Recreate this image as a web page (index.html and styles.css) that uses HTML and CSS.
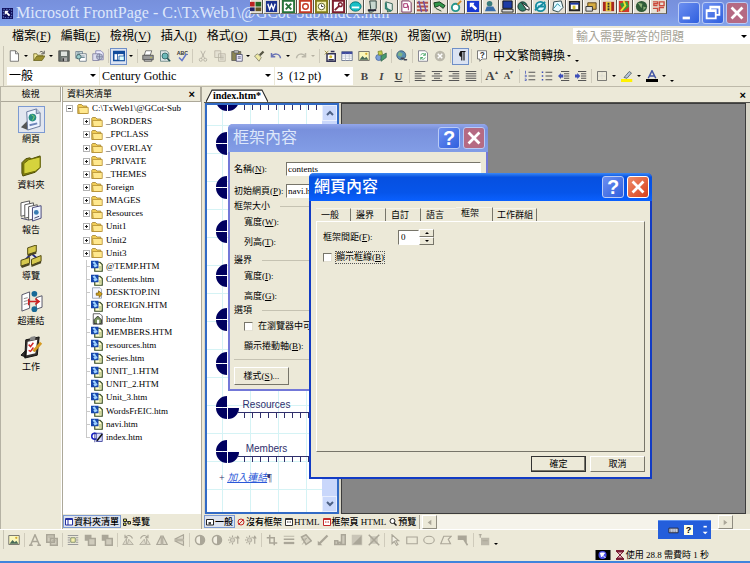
FILE: index.html
```html
<!DOCTYPE html>
<html lang="zh-Hant">
<head>
<meta charset="utf-8">
<title>Microsoft FrontPage</title>
<link rel="stylesheet" href="styles.css">
</head>
<body>
<svg class="sprite" aria-hidden="true">
  <symbol id="new" viewBox="0 0 16 16"><path d="M3 1h7l4 4v10H3z" fill="#fff" stroke="#555"/><path d="M10 1v4h4" fill="none" stroke="#555"/></symbol>
  <symbol id="open" viewBox="0 0 16 16"><path d="M1 14V5h4l1 2h7v2" fill="#f5ec9c" stroke="#66601c"/><path d="M1 14l4-6h11l-4 6z" fill="#9c9130" stroke="#66601c"/><path d="M9 3c2-2 4-1 5 1m1-3v4h-4" fill="none" stroke="#333"/></symbol>
  <symbol id="save" viewBox="0 0 16 16"><path d="M1 1h14v14H1z" fill="#68706c" stroke="#444"/><path d="M4 2h8v6H4z" fill="#dfe3df"/><path d="M5 10h7v5H5z" fill="#aaa"/><path d="M6 11h2v4H6z" fill="#333"/></symbol>
  <symbol id="find" viewBox="0 0 16 16"><path d="M1 2h9v9H1z" fill="#cdd" stroke="#678"/><path d="M6 5h9v10H6z" fill="#fff" stroke="#567"/><path d="M3 4h3M3 6h2m3 2h5m-5 2h5" stroke="#467"/><circle cx="5" cy="9" r="3" fill="#9cc" stroke="#355"/></symbol>
  <symbol id="publish" viewBox="0 0 16 16"><path d="M5 1h7l3 3v9H5z" fill="#eef" stroke="#77a"/><path d="M1 5h8v9H1z" fill="#dde" stroke="#779"/><circle cx="10" cy="9" r="4" fill="#b9c6d6" stroke="#779"/><path d="M6 9h8m-4-4v8" stroke="#779"/></symbol>
  <symbol id="pane" viewBox="0 0 16 16"><path d="M1 2h14v12H1z" fill="#fff" stroke="#124c9c" stroke-width="2"/><path d="M1 4h14" stroke="#124c9c" stroke-width="3"/><path d="M6 4v10m2-6h7v6H8z" stroke="#124c9c" fill="#dff"/></symbol>
  <symbol id="print" viewBox="0 0 16 16"><path d="M5 1h8l-2 6H3z" fill="#fff" stroke="#555"/><path d="M1 7h14v6H1z" fill="#999" stroke="#444"/><path d="M3 13h10v2H3z" fill="#ddd" stroke="#444"/><path d="M11 10h2" stroke="#cc3"/></symbol>
  <symbol id="preview" viewBox="0 0 16 16"><path d="M2 1h8l3 3v11H2z" fill="#dfe7e7" stroke="#577"/><circle cx="8" cy="8" r="4" fill="#6bb9b9" stroke="#255"/><path d="M11 11l4 4" stroke="#255" stroke-width="2"/></symbol>
  <symbol id="cut" viewBox="0 0 16 16"><path d="M5 1l5 10M11 1L6 11" stroke="#aaa69a" fill="none"/><circle cx="5" cy="13" r="2" fill="none" stroke="#aaa69a"/><circle cx="11" cy="13" r="2" fill="none" stroke="#aaa69a"/></symbol>
  <symbol id="copy" viewBox="0 0 16 16"><path d="M1 1h8v9H1zM6 5h9v10H6z" fill="#e4e1d3" stroke="#b5b1a3"/><path d="M8 8h5m-5 2h5m-5 2h5" stroke="#b5b1a3"/></symbol>
  <symbol id="paste" viewBox="0 0 16 16"><path d="M1 2h12v12H1z" fill="#8b8654" stroke="#555"/><path d="M4 1h6v3H4z" fill="#ccc" stroke="#555"/><path d="M7 6h8v9H7z" fill="#eef" stroke="#446"/><path d="M9 9h4m-4 2h4" stroke="#446"/></symbol>
  <symbol id="brush" viewBox="0 0 16 16"><path d="M9 7l5-5" stroke="#554" stroke-width="3"/><path d="M2 8l4-3 5 5-3 5z" fill="#eee9a4" stroke="#776"/></symbol>
  <symbol id="undo" viewBox="0 0 16 16"><path d="M2 4v5h5M2 9c3-5 11-5 12 2" stroke="#6973b5" stroke-width="2" fill="none"/></symbol>
  <symbol id="redo" viewBox="0 0 16 16"><path d="M14 4v5H9m5 0c-3-5-11-5-12 2" stroke="#bbb8aa" stroke-width="2" fill="none"/></symbol>
  <symbol id="comp" viewBox="0 0 16 16"><path d="M4 5h11v10H4z" fill="#fff" stroke="#335" stroke-width="2"/><path d="M1 1l5 5m0-5L1 6" stroke="#887520"/><circle cx="9" cy="9" r="2" fill="#d7bd33"/><path d="M6 13h7M9 2h5" stroke="#335" stroke-width="2"/></symbol>
  <symbol id="table" viewBox="0 0 16 16"><path d="M1 2h14v12H1z" fill="#fff" stroke="#546280"/><path d="M1 4h14" stroke="#3f4b9d" stroke-width="3"/><path d="M1 8h14M1 11h14M6 5v9m5-9v9" stroke="#b6becb"/></symbol>
  <symbol id="pic" viewBox="0 0 16 16"><path d="M1 2h14v12H1z" fill="#faf7bb" stroke="#555"/><path d="M2 13l4-5 3 3 2-2 3 4z" fill="#476a58"/><circle cx="11" cy="5" r="1.5" fill="#d6a92c"/></symbol>
  <symbol id="draw" viewBox="0 0 16 16"><circle cx="5" cy="10" r="4" fill="#7ba0d6" stroke="#4463a3"/><path d="M4 2l5-1 1 5-5 1z" fill="#c4cf49" stroke="#76822b"/><path d="M8 8l7-4v6l-7 5z" fill="#469a6f" stroke="#32624d"/></symbol>
  <symbol id="globe" viewBox="0 0 16 16"><circle cx="7" cy="7" r="6" fill="#5a90b4" stroke="#35536e"/><path d="M4 2l5 3-2 4-5-2z" fill="#7eb285"/><path d="M7 11h3m1 2h3" stroke="#445" stroke-width="2" stroke-linecap="round"/></symbol>
  <symbol id="refresh" viewBox="0 0 16 16"><path d="M2 1h9l3 3v11H2z" fill="#fff" stroke="#667"/><path d="M5 7c1-3 5-3 6 0m0-3v3H8m3 3c-1 3-5 3-6 0m0 3v-3h3" stroke="#219447" fill="none"/></symbol>
  <symbol id="stop" viewBox="0 0 16 16"><circle cx="8" cy="8" r="7" fill="#bbb8ab"/><path d="M5 5l6 6m0-6l-6 6" stroke="#fff" stroke-width="2"/></symbol>
  <symbol id="para" viewBox="0 0 16 16"><path d="M9 2v12M12 2v12M7 2h7" stroke="#111" stroke-width="1.5"/><path d="M9 2a3.500 3.500 0 000 7z" fill="#111"/></symbol>
  <symbol id="left" viewBox="0 0 16 16"><path d="M1 2h14M1 5h9M1 8h14M1 11h9M1 14h14" stroke="#555" stroke-width="1.500"/></symbol>
  <symbol id="center" viewBox="0 0 16 16"><path d="M1 2h14M4 5h8M1 8h14M4 11h8M1 14h14" stroke="#555" stroke-width="1.500"/></symbol>
  <symbol id="right" viewBox="0 0 16 16"><path d="M1 2h14M6 5h9M1 8h14M6 11h9M1 14h14" stroke="#555" stroke-width="1.500"/></symbol>
  <symbol id="just" viewBox="0 0 16 16"><path d="M1 2h14M1 5h14M1 8h14M1 11h14M1 14h14" stroke="#555" stroke-width="1.500"/></symbol>
  <symbol id="nums" viewBox="0 0 16 16"><path d="M6 3h9M6 8h9M6 13h9" stroke="#555" stroke-width="1.500"/><path d="M2 1v4M1 7h2v2H1m0 3h2v2H1" stroke="#3d4fb8" fill="none"/></symbol>
  <symbol id="bullets" viewBox="0 0 16 16"><path d="M6 3h9M6 8h9M6 13h9" stroke="#555" stroke-width="1.500"/><path d="M1 2h2v2H1zm0 5h2v2H1zm0 5h2v2H1z" fill="#3d4fb8"/></symbol>
  <symbol id="outdent" viewBox="0 0 16 16"><path d="M4 2h11M8 5h7M8 8h7M8 11h7M4 14h11" stroke="#555" stroke-width="1.500"/><path d="M7 6H4V4L0 8l4 4v-2h3z" fill="#3d4fb8"/></symbol>
  <symbol id="indent" viewBox="0 0 16 16"><path d="M4 2h11M8 5h7M8 8h7M8 11h7M4 14h11" stroke="#555" stroke-width="1.500"/><path d="M0 6h3V4l4 4-4 4v-2H0z" fill="#3d4fb8"/></symbol>
  <symbol id="border" viewBox="0 0 16 16"><path d="M2 2h12v12H2z" fill="none" stroke="#555"/><path d="M8 3v10M3 8h10" stroke="#ccc" stroke-dasharray="1 1"/></symbol>
  <symbol id="hilite" viewBox="0 0 16 16"><path d="M0 12h15v4H0z" fill="#fff200"/><path d="M4 10l7-8 3 2-6 7z" fill="#b8c4dc" stroke="#455"/></symbol>
  <symbol id="fcolor" viewBox="0 0 16 16"><path d="M0 12h16v4H0z" fill="#000"/><path d="M3 11l5-10 5 10M5 8h6" fill="none" stroke="#4356a5" stroke-width="2"/></symbol>
  <symbol id="folder" viewBox="0 0 16 16"><path d="M1 14V3l1-1h4l2 2h5v10z" fill="#f1cd57" stroke="#9b7a24"/><path d="M2 6h13v8H3z" fill="#ffe88e" stroke="#b08a2e"/></symbol>
  <symbol id="htm" viewBox="0 0 16 16"><path d="M5 3h7l3 3v9H5z" fill="#fffccc" stroke="#344a22" stroke-width="1.500"/><path d="M0 1h10v10H0z" fill="#1646ad"/><path d="M2 3l3-1 2 3-3 1zM3 7l4-2 2 3-4 2z" fill="#9fd3ff"/><path d="M12 8v5" stroke="#799541"/></symbol>
  <symbol id="ini" viewBox="0 0 16 16"><path d="M2 1h10l2 2v12H2z" fill="#f4f6ff" stroke="#8791a5"/><path d="M7 8h3V5l5 4-4 5v-3H7z" fill="#d4a51e" stroke="#795b0b"/></symbol>
  <symbol id="home" viewBox="0 0 16 16"><path d="M3 1h9l3 3v11H3z" fill="#fff" stroke="#333"/><path d="M4 9l5-5 5 5v5H4z" fill="#78915c" stroke="#222"/><path d="M8 9h3v5H8z" fill="#fff"/></symbol>
  <symbol id="frames" viewBox="0 0 16 16"><circle cx="5" cy="7" r="4" fill="#fff" stroke="#171fc5" stroke-width="2"/><path d="M5 2v13M7 3h8v11H7z" fill="#d9dcff" stroke="#252b8d"/><path d="M8 13l7-9" stroke="#111" stroke-width="2"/></symbol>
  <symbol id="vpage" viewBox="0 0 24 24"><path d="M1 20l7-7v10z" fill="#555"/><path d="M7 4l10-3 4 4v14L8 23z" fill="#eef4ff" stroke="#68789c"/><path d="M17 1v5l4-1" fill="#b9c8de" stroke="#68789c"/><circle cx="13" cy="10" r="4" fill="#268c83"/><path d="M12 7l3 2-2 4" stroke="#8bd66d" fill="none"/><path d="M10 18l8-2" stroke="#6e86ba" stroke-width="2"/></symbol>
  <symbol id="vfolder" viewBox="0 0 24 24"><path d="M2 20V9l4-4 4-1 2 1 9-3v12l-5 5-13 4z" fill="#858215" stroke="#494800"/><path d="M4 21V10l5-4 12-3v11l-5 4z" fill="#d5d33d" stroke="#696705"/></symbol>
  <symbol id="vreport" viewBox="0 0 24 24"><path d="M1 4l9-2v14l-9 2z" fill="#fff" stroke="#555"/><path d="M5 6l9-2v14l-9 2z" fill="#fff" stroke="#555"/><path d="M9 8l9-2v14l-9 2z" fill="#fff" stroke="#555"/><path d="M13 9l9-2v13l-9 3z" fill="#eef4ff" stroke="#447"/><circle cx="17" cy="14" r="2.500" fill="#397cb4"/><path d="M15 20l5-2M1 20l8 2" stroke="#446"/></symbol>
  <symbol id="vnav" viewBox="0 0 24 24"><path d="M12 9L6 15m6-6l7 6" stroke="#20288d" stroke-width="2" fill="none"/><path d="M8 3l9-3v7l-9 3zM1 16l9-3v6l-9 3zM12 15l10-4v6l-10 4z" fill="#d6c94e" stroke="#4d470d"/><path d="M8 10l9-3v2l-9 3zM1 22l9-3v2l-8 3zM12 21l10-4v2l-10 4z" fill="#4b4521"/></symbol>
  <symbol id="vlink" viewBox="0 0 24 24"><path d="M2 5l8-3v17l-8 3zM17 8l6-2v12l-6 2z" fill="#fff" stroke="#556"/><path d="M4 9l4-1m-4 4l4-1m-4 4l4-1" stroke="#888"/><path d="M9 12h10m-3-3l4 3-4 3M9 9v7" stroke="#cf2222" stroke-width="1.500" fill="none"/><circle cx="15" cy="4" r="3" fill="#176997"/><circle cx="15" cy="20" r="3" fill="#176997"/></symbol>
  <symbol id="vtask" viewBox="0 0 24 24"><path d="M1 20l5-5v7zM6 4l14-3-2 19-13 3z" fill="#37322f" stroke="#111"/><path d="M8 6l10-2-2 14-9 2z" fill="#fff"/><path d="M11 1l5-1v4l-6 1z" fill="#888"/><path d="M9 9l2 2 3-4m-5 8l2 1 3-4" stroke="#d12828" stroke-width="1.500" fill="none"/><path d="M14 16l8-9" stroke="#d69b22" stroke-width="3"/></symbol>
  <symbol id="gA" viewBox="0 0 16 16"><path d="M2 15L8 1l6 14M4 10h8M0 15h5m6 0h5" fill="none" stroke="#aaa698" stroke-width="2"/></symbol>
  <symbol id="gthumb" viewBox="0 0 16 16"><path d="M1 1h10v10H1zM6 6h9v9H6z" fill="#d0ccbd" stroke="#aaa698" stroke-width="2"/><path d="M3 4h6M8 9h5" stroke="#aaa698"/></symbol>
  <symbol id="gpos" viewBox="0 0 16 16"><path d="M1 2h14M1 5h3m-3 3h3m-3 3h3M12 5h3m-3 3h3m-3 3h3M1 14h14" stroke="#999" stroke-width="1.500"/><path d="M5 5h6v6H5z" fill="#f5f1ac" stroke="#675"/></symbol>
  <symbol id="gfwd" viewBox="0 0 16 16"><path d="M1 1h9v8H1z" fill="#aaa698"/><path d="M6 6h9v9H6z" fill="#cfcbbc" stroke="#aaa698" stroke-width="2"/></symbol>
  <symbol id="grot" viewBox="0 0 16 16"><path d="M1 14l5-8v8zM7 14h8l-6-7z" fill="#ddd9ca" stroke="#aaa698"/><path d="M5 4c4-4 8-1 9 2M4 1v4h4" stroke="#aaa698" stroke-width="1.500" fill="none"/></symbol>
  <symbol id="gflip" viewBox="0 0 16 16"><path d="M7 2v12H1zM9 2v12h6z" fill="#dedacb" stroke="#aaa698" stroke-width="1.500"/></symbol>
  <symbol id="gflipv" viewBox="0 0 16 16"><path d="M14 1v6H2zM14 15V9H2z" fill="#dedacb" stroke="#aaa698" stroke-width="1.500"/></symbol>
  <symbol id="gcon" viewBox="0 0 16 16"><circle cx="8" cy="8" r="6" fill="#f2efe2" stroke="#aaa698" stroke-width="2"/><path d="M8 2v12A6 6 0 008 2z" fill="#aaa698"/></symbol>
  <symbol id="gsun" viewBox="0 0 16 16"><circle cx="6" cy="8" r="3" fill="#d4d0c1" stroke="#aaa698"/><path d="M6 2v2m0 8v2M0 8h2M2 4l1 1m-1 7l1-1M9 5l1-1M13 13V3m-2 3l2-3 2 3" stroke="#aaa698" stroke-width="1.500" fill="none"/></symbol>
  <symbol id="gcrop" viewBox="0 0 16 16"><path d="M5 1v11h10M1 5h10v10" stroke="#aaa698" stroke-width="2" fill="none"/></symbol>
  <symbol id="glines" viewBox="0 0 16 16"><path d="M1 3h14" stroke="#aaa698"/><path d="M1 7h14" stroke="#aaa698" stroke-width="2"/><path d="M1 12h14" stroke="#aaa698" stroke-width="3"/></symbol>
  <symbol id="gpaint" viewBox="0 0 16 16"><path d="M2 4l6-3 7 8-7 5z" fill="#d7d3c3" stroke="#aaa698" stroke-width="2"/><path d="M2 8l7-2M3 14l6-9" stroke="#aaa698"/></symbol>
  <symbol id="gpen" viewBox="0 0 16 16"><path d="M3 13L14 2" stroke="#aaa698" stroke-width="3"/><path d="M1 9v6h6z" fill="#aaa698"/></symbol>
  <symbol id="gbars" viewBox="0 0 16 16"><path d="M1 9h4v5H1zM6 11h3v3H6zM10 1h5v13h-5z" fill="#ccc8ba" stroke="#aaa698" stroke-width="2"/></symbol>
  <symbol id="gpic" viewBox="0 0 16 16"><path d="M1 1h14v14H1z" fill="#c9c5b7"/><path d="M2 14L14 2v12z" fill="#aaa698"/></symbol>
  <symbol id="gx" viewBox="0 0 16 16"><path d="M3 3h10v10H3z" fill="#c9c5b7"/><path d="M1 1l14 14m0-14L1 15" stroke="#aaa698" stroke-width="2"/></symbol>
  <symbol id="gptr" viewBox="0 0 16 16"><path d="M4 1v12l3-3 3 5 2-1-3-5h4z" fill="#f2efe3" stroke="#aaa698" stroke-width="1.500"/></symbol>
  <symbol id="grect" viewBox="0 0 16 16"><path d="M1 4h14v9H1z" fill="none" stroke="#aaa698" stroke-width="1.500"/></symbol>
  <symbol id="goval" viewBox="0 0 16 16"><ellipse cx="8" cy="8" rx="7" ry="5" fill="none" stroke="#aaa698" stroke-width="1.500"/></symbol>
  <symbol id="gpoly" viewBox="0 0 16 16"><path d="M5 3h10l-4 4 3 6H1z" fill="none" stroke="#aaa698" stroke-width="1.500"/></symbol>
  <symbol id="ghot" viewBox="0 0 16 16"><path d="M1 2h12v10l-3-4H1z" fill="#aaa698"/><path d="M9 7l5 8" stroke="#aaa698" stroke-width="2"/></symbol>
  <symbol id="grest" viewBox="0 0 16 16"><path d="M4 5h11v10H4z" fill="#bcb8aa"/><path d="M1 1h4M3 0v5M6 9h7" stroke="#aaa698" stroke-width="1.500"/></symbol>
  <symbol id="tabframe" viewBox="0 0 16 16"><path d="M1 3h14v11H1z" fill="#fff" stroke="#222" stroke-width="2"/><path d="M5 8h5v5H5z" fill="#444"/></symbol>
  <symbol id="tablist" viewBox="0 0 16 16"><path d="M1 1h14v13H1z" fill="#fff" stroke="#2430a2" stroke-width="2"/><path d="M6 1v13M1 3h14" stroke="#2430a2" stroke-width="2"/></symbol>
  <symbol id="tabnav" viewBox="0 0 16 16"><path d="M1 2h6v5H1zM1 10h5v5H1zM10 7h5v5h-5z" fill="#e3e05a" stroke="#222" stroke-width="2"/><path d="M7 5l3 4" stroke="#222" stroke-width="2"/></symbol>
  <symbol id="tabno" viewBox="0 0 16 16"><circle cx="8" cy="8" r="6" fill="none" stroke="#c72525" stroke-width="2"/><path d="M3 13L13 3" stroke="#c72525" stroke-width="2"/></symbol>
  <symbol id="tabhtml" viewBox="0 0 16 16"><path d="M1 1h14v14H1z" fill="#fff" stroke="#333" stroke-width="2"/><path d="M4 8h3m2 0h3M1 3h14" stroke="#333" stroke-width="2"/></symbol>
  <symbol id="tabfhtml" viewBox="0 0 16 16"><path d="M1 1h14v14H1z" fill="#fff" stroke="#c42a2a" stroke-width="2"/><path d="M4 8h3m2 0h3M1 3h14" stroke="#c42a2a" stroke-width="2"/></symbol>
  <symbol id="tabview" viewBox="0 0 16 16"><circle cx="7" cy="6" r="5" fill="#fff" stroke="#222" stroke-width="2"/><path d="M10 10l5 5" stroke="#222" stroke-width="3"/></symbol>
  <symbol id="orb" viewBox="0 0 76 44"><path d="M11 21H0a11 11 0 0111-11zM11 22v11A11 11 0 010 22zM12 22h11a11 11 0 01-11 11z" fill="#000060"/></symbol>
</svg>

<div class="app">
  <header class="titlebar">
    <svg class="logo" viewBox="0 0 16 16"><path d="M0 0h16v16H0z" fill="#10105c"/><path d="M4 4h6L8 6l4 4-2 2-4-4-2 2z" fill="#fff"/><path d="M2 2h12v12H2z" fill="none" stroke="#8fb3ff" stroke-dasharray="2 2"/></svg>
    <h1>Microsoft FrontPage - C:\TxWeb1\@GCot-Sub\index.htm</h1>
    <div class="winbtns">
      <button class="wb" aria-label="最小化"><svg viewBox="0 0 22 22"><path d="M4 15h8v3H4z" fill="#fff"/></svg></button>
      <button class="wb" aria-label="還原"><svg viewBox="0 0 22 22"><path d="M8 8V4h10v9h-4M4 8h10v9H4zM4 9h10M8 5h10" fill="none" stroke="#fff" stroke-width="2"/></svg></button>
      <button class="wb dimclose" aria-label="關閉"><svg viewBox="0 0 22 22"><path d="M5 5l12 12M17 5L5 17" stroke="#fff" stroke-width="3"/></svg></button>
    </div>
    <div class="shortcuts">
      <i><svg viewBox="0 0 14 14"><path d="M0 2h5v5H0z" fill="#b22"/><path d="M6 2h6v5H6z" fill="#262"/><path d="M0 8h5v4H0z" fill="#226"/><path d="M6 8h6v4H6z" fill="#652"/></svg></i>
      <i><svg viewBox="0 0 14 14"><path d="M1 1h12v12H1z" fill="#1a318f"/><path d="M3 4l2 6 2-5 2 5 2-6" stroke="#fff" stroke-width="1.500" fill="none"/></svg></i>
      <i><svg viewBox="0 0 14 14"><path d="M1 1h12v12H1z" fill="#fff" stroke="#28733b" stroke-width="2"/><path d="M4 4l6 6m0-6l-6 6" stroke="#28733b" stroke-width="2"/></svg></i>
      <i><svg viewBox="0 0 14 14"><path d="M1 1h12v12H1z" fill="#fff" stroke="#c43a24" stroke-width="2"/><circle cx="7" cy="7" r="3" fill="none" stroke="#c43a24" stroke-width="1.500"/></svg></i>
      <i><svg viewBox="0 0 14 14"><path d="M1 1h12v12H1z" fill="#f4f1b2" stroke="#827d1a" stroke-width="2"/><circle cx="7" cy="7" r="3.500" fill="#fff" stroke="#555b22"/><path d="M7 5v2h2" stroke="#333" fill="none"/></svg></i>
      <i><svg viewBox="0 0 14 14"><path d="M1 1h12v12H1z" fill="#fff" stroke="#7d1e2e" stroke-width="2"/><circle cx="9" cy="5" r="2" fill="none" stroke="#7d1e2e" stroke-width="1.500"/><path d="M8 6l-5 5" stroke="#7d1e2e" stroke-width="2"/></svg></i>
      <i><svg viewBox="0 0 14 14"><ellipse cx="7" cy="7" rx="6" ry="5" fill="#18bfc6" stroke="#087074"/><path d="M3 8h8" stroke="#fff" stroke-width="2"/></svg></i>
      <i><svg viewBox="0 0 14 14"><path d="M4 1h7v8l-4 4H3l2-4z" fill="#c8d8d0" stroke="#263c38"/><path d="M2 11h9" stroke="#223" stroke-width="2"/></svg></i>
      <i><svg viewBox="0 0 14 14"><path d="M3 2l7 2v7l-5 2z" fill="#e5eee9" stroke="#336052"/><path d="M3 3v6l6 3" fill="none" stroke="#308171" stroke-width="2"/></svg></i>
      <i><svg viewBox="0 0 14 14"><path d="M2 1h8l2 2v10H2z" fill="#fff" stroke="#712b57"/><path d="M4 4h4v4H4zm5 2v5" stroke="#a42c69" fill="none"/></svg></i>
      <i><svg viewBox="0 0 14 14"><path d="M1 3h12M1 7h12M1 11h12" stroke="#b85345" stroke-width="2"/><path d="M3 1l3 12M8 1l3 12" stroke="#6e51a7" stroke-width="1.500"/></svg></i>
      <i><svg viewBox="0 0 14 14"><path d="M1 3l6-1 6 4-2 3-4-3-5 2zM3 9l6 3" fill="#32974a" stroke="#153a1c"/></svg></i>
      <i><svg viewBox="0 0 14 14"><circle cx="6" cy="8" r="4" fill="#fff" stroke="#26968c" stroke-width="2"/><path d="M8 5l4-4" stroke="#d28a2a" stroke-width="2"/></svg></i>
      <i><svg viewBox="0 0 14 14"><path d="M0 1h13v12H0z" fill="#1739d2"/><path d="M3 3h5L7 5l4 4-2 2-4-4-2 1z" fill="#fff"/></svg></i>
      <i><svg viewBox="0 0 14 14"><circle cx="6" cy="4" r="3" fill="#387b7b"/><path d="M1 12l2-5h7l3 5z" fill="#376caa"/></svg></i>
      <i><svg viewBox="0 0 14 14"><path d="M2 1h10v8H2z" fill="#1e3ca4" stroke="#111"/><path d="M1 10h12v3H1z" fill="#dedede" stroke="#222"/></svg></i>
      <i><svg viewBox="0 0 14 14"><circle cx="6" cy="7" r="5" fill="#33856c" stroke="#102e2d"/><path d="M5 3l5 7 3 1V8z" fill="#fff" stroke="#222"/></svg></i>
      <i><svg viewBox="0 0 14 14"><circle cx="7" cy="7" r="5" fill="#d6f6ff" stroke="#168ca0" stroke-width="2"/><path d="M4 7h7M1 11L12 2" stroke="#168ca0" stroke-width="2"/></svg></i>
      <i><svg viewBox="0 0 14 14"><path d="M3 2l8-1 2 7-5 5-6-2z" fill="#e8fbff" stroke="#274145"/><path d="M3 9l4-5 3 3" fill="none" stroke="#168ca0"/></svg></i>
      <i><svg viewBox="0 0 14 14"><path d="M2 2h10v9H2z" fill="#fff" stroke="#222" stroke-width="2"/><path d="M2 4h10" stroke="#1d379d" stroke-width="2"/><path d="M5 6h3v4H5z" fill="#d3c334"/></svg></i>
      <i><svg viewBox="0 0 14 14"><path d="M3 3h9v7H3z" fill="#d6ac41" stroke="#5c421c"/><path d="M1 7h7v5H1z" fill="#ddd" stroke="#333"/></svg></i>
      <i><svg viewBox="0 0 14 14"><path d="M1 2h12v10H1z" fill="#a92820"/><path d="M4 2h6v10H4z" fill="#edce3d"/><path d="M7 3v8" stroke="#333" stroke-dasharray="2 1" stroke-width="2"/></svg></i>
      <i><svg viewBox="0 0 14 14"><path d="M1 1h11v12H1z" fill="#d2372a"/><path d="M2 4l8-3 2 6-6 5z" fill="#3b9b36"/><path d="M6 1l2 5-5 6" stroke="#f2dd34" stroke-width="2" fill="none"/></svg></i>
      <i><svg viewBox="0 0 14 14"><circle cx="7" cy="7" r="6" fill="#305b38"/><path d="M3 3l5 1-1 5zM9 7l3 1-3 3z" fill="#8caf76"/></svg></i>
      <i><svg viewBox="0 0 14 14"><path d="M1 2h5v2H2v2h4M8 2h5v4H8zM1 9h5v4M8 12V8h5" stroke="#cb4a3d" stroke-width="1.500" fill="none"/></svg></i>
    </div>
  </header>

  <nav class="menubar">
    <button>檔案(<u>F</u>)</button><button>編輯(<u>E</u>)</button><button>檢視(<u>V</u>)</button><button>插入(<u>I</u>)</button><button>格式(<u>O</u>)</button><button>工具(<u>T</u>)</button><button>表格(<u>A</u>)</button><button>框架(<u>R</u>)</button><button>視窗(<u>W</u>)</button><button>說明(<u>H</u>)</button>
    <label class="ask drop"><input type="text" placeholder="輸入需要解答的問題" aria-label="輸入需要解答的問題"></label>
  </nav>

  <div class="toolbar">
    <button class="tb"><svg><use href="#new"/></svg></button><b class="caret"></b>
    <button class="tb"><svg><use href="#open"/></svg></button><b class="caret"></b>
    <button class="tb"><svg><use href="#save"/></svg></button>
    <button class="tb"><svg><use href="#find"/></svg></button>
    <button class="tb"><svg><use href="#publish"/></svg></button><s></s>
    <button class="tb on"><svg><use href="#pane"/></svg></button><b class="caret"></b><s></s>
    <button class="tb"><svg><use href="#print"/></svg></button>
    <button class="tb"><svg><use href="#preview"/></svg></button>
    <button class="tb"><svg viewBox="0 0 16 16"><text x="1" y="6" font-size="7" font-weight="700" font-family="Liberation Sans" fill="#333">ABC</text><path d="M4 10l4 4 6-9" stroke="#6478c8" stroke-width="2" fill="none"/></svg></button><s></s>
    <button class="tb"><svg><use href="#cut"/></svg></button>
    <button class="tb"><svg><use href="#copy"/></svg></button>
    <button class="tb"><svg><use href="#paste"/></svg></button><b class="caret narrow"></b>
    <button class="tb"><svg><use href="#brush"/></svg></button>
    <button class="tb"><svg><use href="#undo"/></svg></button><b class="caret"></b>
    <button class="tb"><svg><use href="#redo"/></svg></button><b class="caret off"></b><s></s>
    <button class="tb"><svg><use href="#comp"/></svg></button>
    <button class="tb"><svg><use href="#table"/></svg></button>
    <button class="tb"><svg><use href="#pic"/></svg></button>
    <button class="tb"><svg><use href="#draw"/></svg></button><s></s>
    <button class="tb"><svg><use href="#globe"/></svg></button><s></s>
    <button class="tb"><svg><use href="#refresh"/></svg></button>
    <button class="tb"><svg><use href="#stop"/></svg></button><s></s>
    <button class="tb on"><svg><use href="#para"/></svg></button><s></s>
    <button class="tb"><svg viewBox="0 0 16 16"><path d="M2 1h12v11H8l-3 3v-3H2z" fill="#fff" stroke="#555"/><text x="5" y="11" font-size="11" font-weight="700" font-family="Liberation Sans" fill="#333">?</text></svg></button>
    <button class="convert">中文繁簡轉換</button><b class="caret"></b><b class="caret low"></b>
  </div>

  <div class="toolbar">
    <label class="drop style"><select aria-label="樣式"><option>一般</option></select></label>
    <label class="drop font"><select aria-label="字型"><option>Century Gothic</option></select></label>
    <label class="drop size"><select aria-label="字型大小"><option>3&nbsp; (12 pt)</option></select></label>
    <button class="tb letter"><b>B</b></button><button class="tb letter"><b><i>I</i></b></button><button class="tb letter"><b><u>U</u></b></button><s></s>
    <button class="tb"><svg><use href="#left"/></svg></button>
    <button class="tb"><svg><use href="#center"/></svg></button>
    <button class="tb"><svg><use href="#right"/></svg></button>
    <button class="tb"><svg><use href="#just"/></svg></button><s></s>
    <button class="tb letter grow"><b>A</b><sup>▴</sup></button><button class="tb letter shrink"><b>A</b><sup>▾</sup></button><s></s>
    <button class="tb"><svg><use href="#nums"/></svg></button>
    <button class="tb"><svg><use href="#bullets"/></svg></button>
    <button class="tb"><svg><use href="#outdent"/></svg></button>
    <button class="tb"><svg><use href="#indent"/></svg></button><s></s>
    <button class="tb"><svg><use href="#border"/></svg></button><b class="caret"></b>
    <button class="tb"><svg><use href="#hilite"/></svg></button><b class="caret"></b>
    <button class="tb"><svg><use href="#fcolor"/></svg></button><b class="caret"></b><b class="caret low"></b>
  </div>

  <main class="work">
    <aside class="views">
      <h2>檢視</h2>
      <div class="viewlist">
        <button class="current"><svg><use href="#vpage"/></svg>網頁</button>
        <button><svg><use href="#vfolder"/></svg>資料夾</button>
        <button><svg><use href="#vreport"/></svg>報告</button>
        <button><svg><use href="#vnav"/></svg>導覽</button>
        <button><svg><use href="#vlink"/></svg>超連結</button>
        <button><svg><use href="#vtask"/></svg>工作</button>
      </div>
    </aside>

    <section class="folders">
      <h2>資料夾清單<button class="x" aria-label="關閉">×</button></h2>
      <div class="treebox">
        <ul class="tree">
          <li class="root"><i class="tog minus"></i><svg><use href="#folder"/></svg>C:\TxWeb1\@GCot-Sub</li>
          <li><i class="tog"></i><svg><use href="#folder"/></svg>_BORDERS</li>
          <li><i class="tog"></i><svg><use href="#folder"/></svg>_FPCLASS</li>
          <li><i class="tog"></i><svg><use href="#folder"/></svg>_OVERLAY</li>
          <li><i class="tog"></i><svg><use href="#folder"/></svg>_PRIVATE</li>
          <li><i class="tog"></i><svg><use href="#folder"/></svg>_THEMES</li>
          <li><i class="tog"></i><svg><use href="#folder"/></svg>Foreign</li>
          <li><i class="tog"></i><svg><use href="#folder"/></svg>IMAGES</li>
          <li><i class="tog"></i><svg><use href="#folder"/></svg>Resources</li>
          <li><i class="tog"></i><svg><use href="#folder"/></svg>Unit1</li>
          <li><i class="tog"></i><svg><use href="#folder"/></svg>Unit2</li>
          <li><i class="tog"></i><svg><use href="#folder"/></svg>Unit3</li>
          <li><i class="twig"></i><svg><use href="#htm"/></svg>@TEMP.HTM</li>
          <li><i class="twig"></i><svg><use href="#htm"/></svg>Contents.htm</li>
          <li><i class="twig"></i><svg><use href="#ini"/></svg>DESKTOP.INI</li>
          <li><i class="twig"></i><svg><use href="#htm"/></svg>FOREIGN.HTM</li>
          <li><i class="twig"></i><svg><use href="#home"/></svg>home.htm</li>
          <li><i class="twig"></i><svg><use href="#htm"/></svg>MEMBERS.HTM</li>
          <li><i class="twig"></i><svg><use href="#htm"/></svg>resources.htm</li>
          <li><i class="twig"></i><svg><use href="#htm"/></svg>Series.htm</li>
          <li><i class="twig"></i><svg><use href="#htm"/></svg>UNIT_1.HTM</li>
          <li><i class="twig"></i><svg><use href="#htm"/></svg>UNIT_2.HTM</li>
          <li><i class="twig"></i><svg><use href="#htm"/></svg>Unit_3.htm</li>
          <li><i class="twig"></i><svg><use href="#htm"/></svg>WordsFrEIC.htm</li>
          <li><i class="twig"></i><svg><use href="#htm"/></svg>navi.htm</li>
          <li><i class="twig last"></i><svg><use href="#frames"/></svg>index.htm</li>
        </ul>
      </div>
      <div class="tabs">
        <button class="sel"><svg><use href="#tablist"/></svg>資料夾清單</button>
        <button><svg><use href="#tabnav"/></svg>導覽</button>
      </div>
    </section>

    <section class="editor">
      <div class="doctabs">
        <button class="doctab"><svg viewBox="0 0 62 12" preserveAspectRatio="none"><path d="M0 12L6 1h50l6 11" fill="#fff" stroke="#222"/></svg><span>index.htm*</span></button>
        <button class="x" aria-label="關閉">×</button>
      </div>
      <div class="framearea">
        <div class="navframe">
          <div class="navpage">
            <div class="orb rule"><svg><use href="#orb"/></svg></div>
            <div class="orb"><svg><use href="#orb"/></svg></div>
            <div class="orb"><svg><use href="#orb"/></svg></div>
            <div class="orb"><svg><use href="#orb"/></svg></div>
            <div class="orb"><svg><use href="#orb"/></svg></div>
            <div class="orb"><svg><use href="#orb"/></svg></div>
            <div class="orb"><svg><use href="#orb"/></svg></div>
            <div class="orb rule"><svg><use href="#orb"/></svg><span>Resources</span></div>
            <div class="orb rule"><svg><use href="#orb"/></svg><span>Members</span></div>
            <p class="addlink">+ <a href="#add">加入連結</a><span>¶</span></p>
          </div>
          <div class="vscroll">
            <button aria-label="向上"><svg viewBox="0 0 10 10"><path d="M2 7l3-3 3 3" fill="none" stroke="#4d6185" stroke-width="2"/></svg></button>
            <button aria-label="向下"><svg viewBox="0 0 10 10"><path d="M2 3l3 3 3-3" fill="none" stroke="#4d6185" stroke-width="2"/></svg></button>
          </div>
        </div>
        <div class="mainframe"></div>
      </div>
      <div class="tabs">
        <button class="sel"><svg><use href="#tabframe"/></svg>一般</button>
        <button><svg><use href="#tabno"/></svg>沒有框架</button>
        <button><svg><use href="#tabhtml"/></svg>HTML</button>
        <button><svg><use href="#tabfhtml"/></svg>框架頁 HTML</button>
        <button><svg><use href="#tabview"/></svg>預覽</button>
        <div class="hscroll">
          <button aria-label="向左"><svg viewBox="0 0 10 10"><path d="M7 2v6L3 5z" fill="#aaa698"/></svg></button>
          <button aria-label="向右"><svg viewBox="0 0 10 10"><path d="M3 2v6l4-3z" fill="#aaa698"/></svg></button>
        </div>
      </div>
    </section>
  </main>

  <div class="toolbar pictures">
    <button class="tb"><svg><use href="#pic"/></svg></button><s></s>
    <button class="tb"><svg><use href="#gA"/></svg></button>
    <button class="tb"><svg><use href="#gthumb"/></svg></button><s></s>
    <button class="tb"><svg><use href="#gpos"/></svg></button>
    <button class="tb"><svg><use href="#gfwd"/></svg></button>
    <button class="tb"><svg><use href="#gfwd"/></svg></button><s></s>
    <button class="tb"><svg><use href="#grot"/></svg></button>
    <button class="tb mirror"><svg><use href="#grot"/></svg></button>
    <button class="tb"><svg><use href="#gflip"/></svg></button>
    <button class="tb"><svg><use href="#gflipv"/></svg></button><s></s>
    <button class="tb"><svg><use href="#gcon"/></svg></button>
    <button class="tb"><svg><use href="#gcon"/></svg></button>
    <button class="tb"><svg><use href="#gsun"/></svg></button>
    <button class="tb"><svg><use href="#gsun"/></svg></button><s></s>
    <button class="tb"><svg><use href="#gcrop"/></svg></button>
    <button class="tb"><svg><use href="#glines"/></svg></button>
    <button class="tb"><svg><use href="#gpaint"/></svg></button>
    <button class="tb"><svg><use href="#gpen"/></svg></button>
    <button class="tb"><svg><use href="#gbars"/></svg></button>
    <button class="tb"><svg><use href="#gpic"/></svg></button>
    <button class="tb"><svg><use href="#gx"/></svg></button><s></s>
    <button class="tb"><svg><use href="#gptr"/></svg></button>
    <button class="tb"><svg><use href="#grect"/></svg></button>
    <button class="tb"><svg><use href="#goval"/></svg></button>
    <button class="tb"><svg><use href="#gpoly"/></svg></button>
    <button class="tb"><svg><use href="#ghot"/></svg></button><s></s>
    <button class="tb"><svg><use href="#grest"/></svg></button><b class="caret low"></b>
  </div>

  <footer class="status">
    <svg class="netic" viewBox="0 0 15 10"><path d="M0 0h15v10H0z" fill="#000"/><circle cx="7" cy="5" r="4" fill="#4b50e8"/><path d="M5 3h4L6 7zM6 4l4 4" fill="#fff" stroke="#fff"/></svg>
    <svg class="glass" viewBox="0 0 8 10"><path d="M0 1h8M0 9h8" stroke="#7a1f35" stroke-width="2"/><path d="M1 2h6L4 5l3 3H1l3-3z" fill="#efc3cb" stroke="#7a1f35"/></svg>
    <span>使用 28.8 需費時 1 秒</span>
  </footer>

  <section class="dialog back">
    <header><h2>框架內容</h2>
      <button class="wb" aria-label="說明">?</button>
      <button class="wb dimclose" aria-label="關閉"><svg viewBox="0 0 22 22"><path d="M5 5l12 12M17 5L5 17" stroke="#fff" stroke-width="3"/></svg></button>
    </header>
    <form class="frameform">
      <div class="field"><label for="nm">名稱(<u>N</u>):</label><input id="nm" type="text" value="contents"></div>
      <div class="field"><label for="ip">初始網頁(<u>P</u>):</label><input id="ip" type="text" value="navi.htm"></div>
      <h3 class="first">框架大小</h3>
      <p>寬度(<u>W</u>):</p>
      <p>列高(<u>T</u>):</p>
      <h3>邊界</h3>
      <p>寬度(<u>I</u>):</p>
      <p>高度(<u>G</u>):</p>
      <h3 class="opt">選項</h3>
      <p><label><input type="checkbox">在瀏覽器中可</label></p>
      <p>顯示捲動軸(<u>B</u>):</p>
      <hr>
      <button type="button" class="btn">樣式(<u>S</u>)...</button>
    </form>
  </section>

  <section class="dialog front">
    <header><h2>網頁內容</h2>
      <button class="wb" aria-label="說明">?</button>
      <button class="wb close" aria-label="關閉"><svg viewBox="0 0 22 22"><path d="M5 5l12 12M17 5L5 17" stroke="#fff" stroke-width="3"/></svg></button>
    </header>
    <form class="pageform">
      <div class="dtabs">
        <button type="button">一般</button><button type="button">邊界</button><button type="button">自訂</button><button type="button">語言</button><button type="button" class="active">框架</button><button type="button">工作群組</button>
      </div>
      <div class="panel">
        <div class="spinrow">
          <label for="gap">框架間距(<u>F</u>):</label>
          <input id="gap" type="text" value="0">
          <div class="spin"><button type="button" aria-label="增加"></button><button type="button" aria-label="減少"></button></div>
        </div>
        <label class="show"><input type="checkbox"><span>顯示框線(<u>B</u>)</span></label>
      </div>
      <div class="actions"><button type="button" class="btn default">確定</button><button type="button" class="btn">取消</button></div>
    </form>
  </section>

  <div class="langbar">
    <svg viewBox="0 0 12 8"><path d="M1 2h10v5H1z" fill="#dce6f5" stroke="#223"/><path d="M2 4h8M2 6h8" stroke="#334" stroke-dasharray="1 1"/></svg>
    <span>?</span>
    <svg viewBox="0 0 12 12"><path d="M6 2h4" stroke="#fff" stroke-width="2"/><path d="M5 8h6l-3 3z" fill="#fff"/></svg>
  </div>
</div>
</body>
</html>
```
FILE: styles.css
```css
* { box-sizing: border-box; }

body, h1, h2, h3, p, ul, form { margin: 0; padding: 0; }

body {
  font: 9px/12px "Liberation Serif", "Noto Sans CJK TC", serif;
  color: #000;
  background: #ece9d8;
}

button, input, select {
  font: inherit;
  color: inherit;
  margin: 0;
  padding: 0;
  border: 0;
  background: none;
  border-radius: 0;
  white-space: nowrap;
}

h2, h3 { font-size: inherit; font-weight: 400; }
svg { display: block; flex: none; }
.sprite { position: absolute; width: 0; height: 0; }

.app {
  position: relative;
  display: flex;
  flex-direction: column;
  min-height: 100vh;
  overflow: hidden;
  border-bottom: 2px solid #3f84dc;
}

/* Title bar */
.titlebar {
  position: relative;
  display: flex;
  align-items: center;
  height: 26px;
  padding: 0 2px;
  background: linear-gradient(#7790dc, #7c97e4 60%, #84a5ea);
}
.logo { width: 11px; height: 11px; margin-right: 3px; }
.titlebar h1 {
  flex: 1;
  font-size: 16px;
  line-height: 20px;
  font-weight: 400;
  color: #dde7fa;
  white-space: nowrap;
}
.winbtns { display: flex; gap: 2px; }
.wb {
  width: 22px;
  height: 22px;
  border: 1px solid #b9cbf6;
  border-radius: 3px;
  background: linear-gradient(135deg, #6c8ff0, #2f5fde);
  color: #fff;
  font: 700 20px/20px "Liberation Sans", sans-serif;
  text-align: center;
}
.wb svg { width: 20px; height: 20px; }
.wb.dimclose { background: #b56a83; }
.wb.close { background: linear-gradient(135deg, #ef8e6c, #d8401c); border-color: #fff; }

.shortcuts {
  position: absolute;
  left: 250px;
  top: 0;
  width: 417px;
  height: 14px;
  display: grid;
  grid-template-columns: 13px repeat(24, 1fr);
}
.shortcuts i {
  display: flex;
  justify-content: center;
  background: #e6e1d5;
  border-right: 1px solid #55534c;
  border-bottom: 1px solid #77746a;
  border-left: 1px solid #fff;
}
.shortcuts svg { width: 13px; height: 13px; }

/* Menu bar */
.menubar {
  display: flex;
  align-items: center;
  gap: 10px;
  height: 20px;
  padding-left: 12px;
  font-size: 12px;
  line-height: 18px;
}
.ask { margin-left: auto; width: 177px; height: 16px; }
.ask input { width: 100%; height: 16px; padding-left: 3px; line-height: 16px; }
.ask input::placeholder { color: #a6a396; opacity: 1; }

.drop { position: relative; display: block; background: #fff; }
.drop::after {
  content: "";
  position: absolute;
  right: 3px;
  top: 7px;
  border: 3px solid transparent;
  border-top-color: #000;
  border-bottom: 0;
}

/* Toolbars */
.toolbar {
  display: flex;
  align-items: center;
  height: 20px;
  padding-left: 5px;
  background: linear-gradient(90deg, #c9c5b5 0 1px, transparent 1px) 3px 0 / 3px 100% no-repeat;
}
.tb {
  display: flex;
  align-items: center;
  justify-content: center;
  flex: none;
  width: 17px;
  height: 17px;
}
.tb svg { width: 12px; height: 12px; }
.tb.on { border: 1px solid #6f8fc7; background: #dbe3f2; }
.mirror svg { transform: scaleX(-1); }
.letter { font-size: 11px; color: #444; }
.letter sup { font-size: 6px; line-height: 8px; align-self: flex-start; }
.grow { font-size: 13px; }
.shrink { font-size: 9px; }
.toolbar s { flex: none; width: 1px; height: 14px; margin: 0 1px 0 2px; background: #cfcbbb; }
.caret { flex: none; display: flex; justify-content: center; width: 8px; }
.caret::before {
  content: "";
  border: 2px solid transparent;
  border-top-color: #000;
  border-bottom: 0;
}
.caret.narrow { width: 5px; }
.caret.off::before { border-top-color: #b5b1a2; }
.caret.low { align-self: flex-end; padding-bottom: 4px; }
.convert { font-size: 12px; line-height: 17px; margin-left: 3px; }
.toolbar .drop { flex: none; height: 18px; margin-right: 1px; font-size: 12px; }
.toolbar select {
  display: block;
  appearance: none;
  width: 100%;
  height: 18px;
  padding-left: 2px;
  line-height: 18px;
}
.style { width: 92px; margin-left: 2px; }
.font { width: 174px; }
.size { width: 78px; }
.size + .tb { margin-left: 2px; }

/* Work area */
.work { flex: 1; display: flex; min-height: 0; border-top: 1px solid #bdb9a9; }

.views { width: 62px; border-right: 1px solid #fff; border-left: 1px solid #b5b2a4; }
.views h2, .folders h2 {
  height: 15px;
  line-height: 15px;
  border-bottom: 1px solid #aca899;
  border-right: 1px solid #aca899;
}
.views h2 { text-align: center; }
.viewlist { display: grid; grid-auto-rows: 1fr; height: 273px; margin-top: 4px; }
.viewlist button { display: flex; flex-direction: column; align-items: center; gap: 1px; width: 100%; line-height: 11px; }
.viewlist svg { width: 27px; height: 27px; padding: 2px; }
.viewlist .current svg { border: 1px solid #7c9ad2; background: #e2e6ef; padding: 1px; }

.folders {
  display: flex;
  flex-direction: column;
  width: 140px;
  border-left: 1px solid #aca899;
  border-right: 1px solid #aca899;
}
.folders h2 { display: flex; justify-content: space-between; padding-left: 4px; }
.x { font: 700 11px/14px "Liberation Sans", sans-serif; padding: 0 5px; }
.treebox { flex: 1; background: #fff; }
.tree { display: grid; grid-auto-rows: 1fr; height: 342px; list-style: none; }
.tree li { display: flex; align-items: center; padding-left: 20px; white-space: nowrap; line-height: 13px; }
.tree .root { padding-left: 3px; }
.tree svg { width: 12px; height: 12px; margin: 0 3px 0 1px; }
.tree .root svg { margin-left: 4px; }
.tog {
  flex: none;
  width: 7px;
  height: 7px;
  border: 1px solid #b3b3b3;
  background: linear-gradient(#222, #222) center / 3px 1px no-repeat, linear-gradient(#222, #222) center / 1px 3px no-repeat;
}
.tog.minus { background: linear-gradient(#222, #222) center / 3px 1px no-repeat; }
.twig {
  flex: none;
  width: 7px;
  height: 100%;
  background: linear-gradient(#c9c9c9, #c9c9c9) 3px 50% / 5px 1px no-repeat, linear-gradient(#c9c9c9, #c9c9c9) 3px 0 / 1px 100% no-repeat;
}
.twig.last { background-size: 5px 1px, 1px 50%; }

.tabs { display: flex; height: 15px; gap: 1px; padding-top: 1px; font-weight: 500; }
.tabs > button { display: flex; align-items: center; gap: 1px; padding: 0 1px; height: 13px; }
.tabs > button > svg { width: 8px; height: 8px; }
.tabs .sel { border: 1px solid #7c9ad2; background: #dde3ee; }

.editor { flex: 1; display: flex; flex-direction: column; min-width: 0; padding-left: 2px; }
.doctabs { display: flex; align-items: flex-end; justify-content: space-between; height: 16px; border-bottom: 1px solid #55544e; padding-left: 2px; }
.doctab { position: relative; width: 62px; height: 13px; font-size: 10px; font-weight: 700; }
.doctab svg { position: absolute; inset: 0; width: 100%; height: 100%; }
.doctab span { position: relative; }
.doctabs .x { padding: 0 4px; }
.framearea { flex: 1; display: flex; gap: 2px; padding-right: 4px; background: #d8d5c7; min-height: 0; }
.navframe { display: flex; width: 134px; border: 2px solid #316ac5; margin-left: 1px; }
.mainframe { flex: 1; background: #868686; border: 1px solid #3c3c3c; }
.navpage {
  flex: 1;
  overflow: hidden;
  color: #30306c;
  background:
    linear-gradient(90deg, #d5f3f5 1px, transparent 1px) 15px 0 / 28px 28px,
    linear-gradient(#d5f3f5 1px, transparent 1px) 0 20px / 28px 28px,
    #fff;
}
.orb { position: relative; height: 44px; padding-left: 9px; }
.orb:first-child { margin-top: -27px; }
.orb svg { width: 76px; height: 44px; }
.orb span {
  position: absolute;
  left: 12px;
  right: 8px;
  top: 12px;
  text-align: center;
  font: 10px/14px "Liberation Sans", sans-serif;
}
.rule::after {
  content: "";
  position: absolute;
  left: 30px;
  right: 0;
  top: 26px;
  height: 5px;
  border-top: 1px solid #30306c;
  background: repeating-linear-gradient(90deg, transparent 0 7px, #30306c 7px 8px);
}
.addlink { padding-left: 12px; font-size: 10px; line-height: 14px; white-space: nowrap; margin-top: -3px; }
.addlink a { color: #2a58d8; font-style: italic; }
.vscroll { display: flex; flex-direction: column; justify-content: space-between; width: 15px; background: #c9d7fb; }
.vscroll button { height: 16px; background: #cbd9fc; border: 1px solid #e9effe; display: grid; place-items: center; }
.vscroll svg { width: 10px; height: 10px; }

.hscroll {
  flex: 1;
  display: flex;
  justify-content: space-between;
  margin: 0 17px 0 1px;
  padding-left: 2px;
  border-left: 1px solid #aca899;
  background: #f5f3ea;
}
.hscroll button { width: 15px; height: 14px; border: 1px solid #fff; border-right-color: #8f8c80; border-bottom-color: #8f8c80; background: #ece9d8; display: grid; place-items: center; }
.hscroll svg { width: 9px; height: 9px; }

.pictures { border-top: 1px solid #fff; }
.status { display: flex; align-items: center; justify-content: flex-end; height: 12px; padding-right: 41px; white-space: nowrap; }
.netic { width: 16px; height: 10px; margin-right: 5px; }
.glass { width: 8px; height: 10px; margin-right: 2px; }

/* Floating windows */
.dialog { position: absolute; background: #ece9d8; border-radius: 5px 5px 0 0; border: 2px solid #7378d8; border-top: 0; }
.dialog header {
  display: flex;
  align-items: center;
  gap: 3px;
  height: 28px;
  margin: 0 -2px;
  padding: 0 3px 0 5px;
  border-radius: 5px 5px 0 0;
  background: linear-gradient(#93a6ea, #7890dc 20%, #829de6);
  color: #dde7fa;
}
.dialog h2 { flex: 1; font-size: 16px; line-height: 26px; }
.back { left: 228px; top: 124px; width: 260px; height: 267px; }
.front { left: 309px; top: 173px; width: 343px; height: 306px; border-color: #123bc4; }
.front header { background: linear-gradient(#3b88f5, #0650e0 15%, #0655ea 70%, #0a60ff); color: #fff; }
.front h2 { font-weight: 500; }

.frameform { padding: 9px 5px 0 4px; }
.field { display: flex; align-items: center; height: 15px; margin-bottom: 7px; }
.field label { width: 52px; white-space: nowrap; }
.field input { flex: 1; min-width: 0; height: 14px; background: #fff; padding-left: 1px; border: 1px solid #fff; border-top-color: #77756a; border-left-color: #77756a; }
.frameform h3 { display: flex; align-items: center; gap: 10px; line-height: 12px; margin-top: 2px; }
.frameform h3::after { content: ""; flex: 1; height: 1px; background: #c5c2b2; }
.frameform p { padding-left: 10px; line-height: 20px; }
.frameform h3.first { margin-top: -5px; }
.frameform h3.opt { margin-top: -2px; }
.frameform p label { display: flex; align-items: center; gap: 5px; }
input[type="checkbox"] { appearance: none; width: 9px; height: 9px; background: #fff; border: 1px solid #e4e1d3; border-top-color: #77756a; border-left-color: #77756a; }
.frameform hr { margin: 3px 0 7px; border: 0; height: 1px; background: #c5c2b2; }
.btn { width: 55px; height: 16px; line-height: 13px; border: 1px solid #fff; border-right-color: #77756a; border-bottom-color: #77756a; background: #ece9d8; }
.frameform .btn { height: 18px; }

.pageform { padding: 6px 5px; }
.dtabs { display: flex; align-items: flex-end; height: 14px; }
.dtabs button { width: 35px; height: 13px; padding-left: 5px; text-align: left; border-top: 1px solid #f6f4ea; border-right: 1px solid #77756a; }
.dtabs button:last-child { width: 44px; padding-left: 4px; }
.dtabs .active { width: 37px; height: 14px; line-height: 10px; padding-bottom: 3px; }
.dtabs button:nth-child(4) { border-right-color: transparent; }
.panel { height: 231px; padding: 7px 6px; border: 1px solid #fff; border-right: 1px solid #77756a; border-bottom: 1px solid #77756a; }
.spinrow { display: flex; align-items: center; height: 16px; }
.spinrow label { width: 75px; }
.spinrow input { width: 21px; height: 15px; padding-left: 2px; background: #fff; border: 1px solid #fff; border-top-color: #77756a; border-left-color: #77756a; }
.spin { display: grid; }
.spin button { display: grid; place-items: center; width: 15px; height: 8px; border: 1px solid #fff; border-right-color: #77756a; border-bottom-color: #77756a; }
.spin button::before { content: ""; border: 2px solid transparent; border-bottom-color: #000; border-top: 0; }
.spin button:last-child::before { border-top: 2px solid #000; border-bottom: 0; }
.show { display: flex; align-items: center; gap: 3px; margin-top: 6px; }
.show span { outline: 1px dotted #555; outline-offset: -1px; padding: 0 1px; line-height: 13px; }
.actions { display: flex; justify-content: flex-end; gap: 4px; margin-top: 4px; }
.default { border: 1px solid #333; box-shadow: inset -1px -1px #77756a; }

.langbar {
  position: absolute;
  left: 658px;
  top: 520px;
  width: 53px;
  height: 19px;
  display: flex;
  align-items: center;
  justify-content: flex-end;
  gap: 5px;
  padding-right: 2px;
  background: #245edb;
  border-top: 1px solid #5f91ee;
}
.langbar svg { width: 11px; height: 10px; }
.langbar span { width: 9px; height: 10px; background: #ffffe6; font: 700 9px/10px "Liberation Sans", sans-serif; text-align: center; }
```
